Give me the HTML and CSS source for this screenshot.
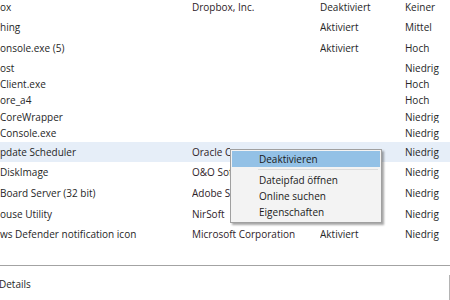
FILE: index.html
```html
<!DOCTYPE html>
<html lang="de">
<head>
<meta charset="utf-8">
<link rel="stylesheet" href="styles.css">
</head>
<body>
<div class="page">
  <div class="list">
    <div class="row h20 first"><span class="c1">ox</span><span class="c2">Dropbox, Inc.</span><span class="c3">Deaktiviert</span><span class="c4">Keiner</span></div>
    <div class="row h20"><span class="c1">hing</span><span class="c2"></span><span class="c3">Aktiviert</span><span class="c4">Mittel</span></div>
    <div class="row h21"><span class="c1">onsole.exe (5)</span><span class="c2"></span><span class="c3">Aktiviert</span><span class="c4">Hoch</span></div>
    <div class="row h19"><span class="c1">ost</span><span class="c2"></span><span class="c3"></span><span class="c4">Niedrig</span></div>
    <div class="row h13"><span class="c1">Client.exe</span><span class="c2"></span><span class="c3"></span><span class="c4">Hoch</span></div>
    <div class="row h20"><span class="c1">ore_a4</span><span class="c2"></span><span class="c3"></span><span class="c4">Hoch</span></div>
    <div class="row h13"><span class="c1">CoreWrapper</span><span class="c2"></span><span class="c3"></span><span class="c4">Niedrig</span></div>
    <div class="row h19"><span class="c1">Console.exe</span><span class="c2"></span><span class="c3"></span><span class="c4">Niedrig</span></div>
    <div class="row h20 selected"><span class="c1">pdate Scheduler</span><span class="c2 under">Oracle Corporation</span><span class="c3"></span><span class="c4">Niedrig</span></div>
    <div class="row h20"><span class="c1">DiskImage</span><span class="c2 under">O&amp;O Software GmbH</span><span class="c3"></span><span class="c4">Niedrig</span></div>
    <div class="row h21"><span class="c1">Board Server (32 bit)</span><span class="c2 under">Adobe Systems</span><span class="c3"></span><span class="c4">Niedrig</span></div>
    <div class="row h22"><span class="c1">ouse Utility</span><span class="c2 under">NirSoft</span><span class="c3"></span><span class="c4">Niedrig</span></div>
    <div class="row h18"><span class="c1">ws Defender notification icon</span><span class="c2">Microsoft Corporation</span><span class="c3">Aktiviert</span><span class="c4">Niedrig</span></div>
  </div>
  <div class="footer">
    <span class="details">Details</span>
    <span class="button"></span>
  </div>
  <div class="menu">
    <div class="item active">Deaktivieren</div>
    <div class="sep"></div>
    <div class="item">Dateipfad öffnen</div>
    <div class="item">Online suchen</div>
    <div class="item">Eigenschaften</div>
  </div>
</div>
</body>
</html>
```
FILE: styles.css
```css
html, body {
  margin: 0;
  padding: 0;
  background: #ffffff;
}
body {
  width: 450px;
  height: 300px;
  overflow: hidden;
  font-family: "Open Sans", "Noto Sans", sans-serif;
  font-size: 10px;
  color: #262626;
}
.page {
  position: relative;
  width: 450px;
  height: 300px;
  overflow: hidden;
}
.list {
  display: flex;
  flex-direction: column;
  height: 265px;
}
.row {
  display: grid;
  grid-template-columns: 192px 128px 85px 1fr;
  align-items: center;
  white-space: nowrap;
  overflow: hidden;
  flex: none;
}
.row.first { margin-top: -3px; }
.h13 { height: 13px; }
.h18 { height: 18px; }
.h19 { height: 19px; }
.h20 { height: 20px; }
.h21 { height: 21px; }
.h22 { height: 22px; }
.row.selected { background: #e6eef8; }
.c1, .c2, .c3, .c4 { overflow: hidden; }
.c2 { color: #2e2228; }
.c2.under { width: 38px; }
.footer {
  border-top: 1px solid #a3a3a3;
  box-shadow: 0 1px 0 #ececec;
  height: 35px;
  display: flex;
  align-items: flex-start;
  justify-content: space-between;
}
.details {
  margin-top: 11px;
  margin-left: -1px;
}
.button {
  margin-top: 9px;
  margin-right: -30px;
  width: 31px;
  height: 30px;
  box-sizing: border-box;
  border: 1px solid #b4b4b4;
  background: #f1f1f1;
}
.menu {
  position: absolute;
  left: 230px;
  top: 149px;
  width: 152px;
  height: 74px;
  box-sizing: border-box;
  padding: 1px;
  background: #f3f3f3;
  border: 1px solid #a0a0a0;
  box-shadow: 2px 2px 2px rgba(0, 0, 0, 0.35);
  color: #1a1a1a;
}
.item {
  height: 16px;
  line-height: 16px;
  padding-left: 27px;
}
.item.active { background: #93c1e6; }
.sep {
  height: 1px;
  margin: 2px 2px 2px 26px;
  background: #dcdcdc;
}
```
